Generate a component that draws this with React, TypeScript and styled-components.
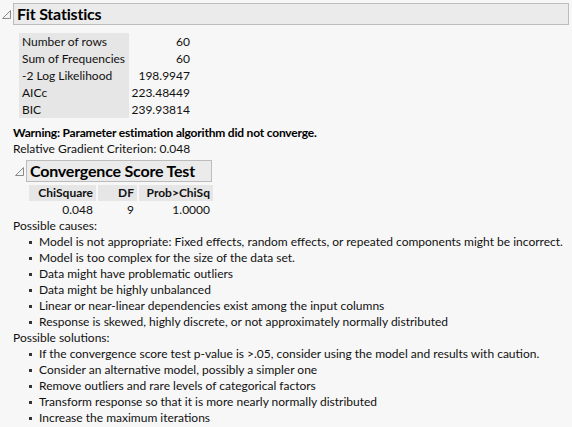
import React from "react";
import styled, { createGlobalStyle } from "styled-components";

const GlobalStyle = createGlobalStyle`
  html, body {
    margin: 0;
    padding: 0;
    background: #f7f7f7;
  }
  body {
    font-family: "Lato", "Liberation Sans", sans-serif;
    font-size: 12px;
    color: #111;
  }
`;

type Stat = { label: string; value: string };

const fitStats: Stat[] = [
  { label: "Number of rows", value: "60" },
  { label: "Sum of Frequencies", value: "60" },
  { label: "-2 Log Likelihood", value: "198.9947" },
  { label: "AICc", value: "223.48449" },
  { label: "BIC", value: "239.93814" },
];

const causes = [
  "Model is not appropriate: Fixed effects, random effects, or repeated components might be incorrect.",
  "Model is too complex for the size of the data set.",
  "Data might have problematic outliers",
  "Data might be highly unbalanced",
  "Linear or near-linear dependencies exist among the input columns",
  "Response is skewed, highly discrete, or not approximately normally distributed",
];

const solutions = [
  "If the convergence score test p-value is >.05, consider using the model and results with caution.",
  "Consider an alternative model, possibly a simpler one",
  "Remove outliers and rare levels of categorical factors",
  "Transform response so that it is more nearly normally distributed",
  "Increase the maximum iterations",
];

const Page = styled.div`
  width: 572px;
  height: 427px;
  overflow: hidden;
  padding-top: 3px;
  box-sizing: border-box;
`;

const Outline = styled.div`
  display: flex;
  flex-direction: column;
  align-items: stretch;
`;

const OutlineHead = styled.div<{ gap?: number }>`
  display: flex;
  align-items: flex-start;
  margin-top: ${({ gap }) => gap ?? 0}px;
`;

const Toggle = styled.svg`
  flex: none;
  width: 9px;
  height: 9px;
  margin: 7px 2px 0 2px;
`;

const TitleBox = styled.div<{ width?: number }>`
  box-sizing: border-box;
  height: 22px;
  ${({ width }) => (width ? `width: ${width}px;` : "flex: 1; margin-right: 3px;")}
  background: #ebebeb;
  border: 1px solid #bcbcbc;
  padding-left: 3px;
  font-size: 16px;
  font-weight: 700;
  letter-spacing: -0.2px;
  line-height: 19px;
  color: #000;
  white-space: nowrap;
`;

const Body = styled.div<{ left: number }>`
  display: flex;
  flex-direction: column;
  align-items: flex-start;
  padding-left: ${({ left }) => left}px;
`;

const StatTable = styled.table`
  border-collapse: collapse;
  margin-top: 8px;
  margin-left: 6px;
  td {
    height: 17px;
    padding: 0;
    line-height: 17px;
    white-space: nowrap;
  }
`;

const LabelCell = styled.td`
  background: #e6e6e6;
  padding: 0 3px !important;
  width: 104px;
`;

const ValueCell = styled.td`
  text-align: right;
  width: 61px;
`;

const Warning = styled.div`
  margin-top: 7px;
  font-weight: 700;
  letter-spacing: -0.2px;
  line-height: 16px;
  color: #000;
`;

const Line = styled.div`
  line-height: 16px;
`;

const ScoreTable = styled.table`
  border-collapse: separate;
  border-spacing: 2px 0;
  margin: 3px 0 0 1px;
  th {
    background: #e6e6e6;
    font-weight: 700;
    height: 16px;
    line-height: 16px;
    padding: 0 3px;
    text-align: right;
    white-space: nowrap;
  }
  td {
    height: 17px;
    line-height: 17px;
    padding: 0 3px;
    text-align: right;
  }
`;

const HeadCell = styled.th<{ w: number }>`
  width: ${({ w }) => w}px;
  box-sizing: border-box;
`;

const List = styled.ul`
  list-style: none;
  margin: 0;
  padding: 0 0 0 15px;
`;

const Item = styled.li`
  position: relative;
  padding-left: 11px;
  line-height: 16px;
  white-space: nowrap;
  &::before {
    content: "";
    position: absolute;
    left: 1px;
    top: 7px;
    width: 3px;
    height: 3px;
    background: #333;
  }
`;

const Triangle = () => (
  <Toggle viewBox="0 0 9 9">
    <polygon points="0.5,8.5 8.5,8.5 8.5,0.5" fill="#f4f4f4" stroke="#8a8a8a" strokeWidth="1" />
  </Toggle>
);

export default function App() {
  return (
    <Page>
      <GlobalStyle />
      <Outline>
        <OutlineHead>
          <Triangle />
          <TitleBox>Fit Statistics</TitleBox>
        </OutlineHead>
        <Body left={13}>
          <StatTable>
            <tbody>
              {fitStats.map(({ label, value }) => (
                <tr key={label}>
                  <LabelCell>{label}</LabelCell>
                  <ValueCell>{value}</ValueCell>
                </tr>
              ))}
            </tbody>
          </StatTable>
          <Warning>Warning: Parameter estimation algorithm did not converge.</Warning>
          <Line>Relative Gradient Criterion: 0.048</Line>
          <Outline>
            <OutlineHead gap={3}>
              <Triangle />
              <TitleBox width={186}>Convergence Score Test</TitleBox>
            </OutlineHead>
            <Body left={13}>
              <ScoreTable>
                <thead>
                  <tr>
                    <HeadCell w={67}>ChiSquare</HeadCell>
                    <HeadCell w={39}>DF</HeadCell>
                    <HeadCell w={74}>Prob&gt;ChiSq</HeadCell>
                  </tr>
                </thead>
                <tbody>
                  <tr>
                    <td>0.048</td>
                    <td>9</td>
                    <td>1.0000</td>
                  </tr>
                </tbody>
              </ScoreTable>
            </Body>
          </Outline>
          <Line>Possible causes:</Line>
          <List>
            {causes.map((c) => (
              <Item key={c}>{c}</Item>
            ))}
          </List>
          <Line>Possible solutions:</Line>
          <List>
            {solutions.map((s) => (
              <Item key={s}>{s}</Item>
            ))}
          </List>
        </Body>
      </Outline>
    </Page>
  );
}
